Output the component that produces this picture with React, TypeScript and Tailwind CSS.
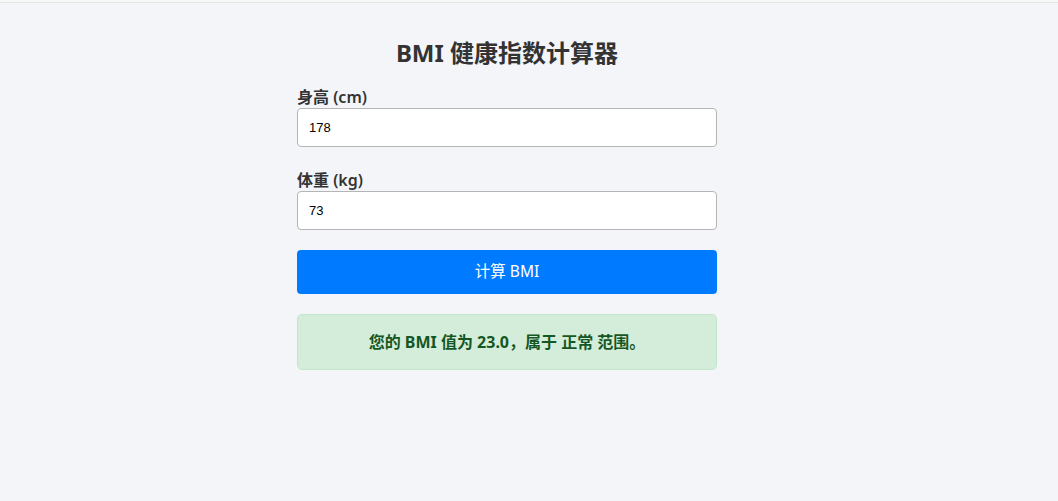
import { useState } from "react";

const font = { fontFamily: '"Noto Sans", "Noto Sans CJK SC", sans-serif' };
const inputFont = { fontFamily: '"Liberation Sans", Arial, sans-serif' };

export default function App() {
  const [height, setHeight] = useState("178");
  const [weight, setWeight] = useState("73");

  return (
    <div className="min-h-[501px] bg-[#f4f5f9] text-[#333]" style={font}>
      <div className="h-[3px] border-b border-[#e6e6e6] bg-[#f7f7f7]" />
      <div className="flex justify-center pr-[44px]">
        <div className="w-[420px] pt-[34px]">
          <h1 className="text-center text-[24px] font-bold leading-[32px] text-[#333]">
            BMI 健康指数计算器
          </h1>

          <label className="mt-[18px] block text-[16px] font-semibold leading-[20px]">
            身高 (cm)
          </label>
          <input
            type="text"
            value={height}
            onChange={(e) => setHeight(e.target.value)}
            className="mt-[1px] block h-[39px] w-full rounded-[4px] border border-[#b5b5b5] bg-white px-[11px] text-[13px] text-black outline-none"
            style={inputFont}
          />

          <label className="mt-[23px] block text-[16px] font-semibold leading-[20px]">
            体重 (kg)
          </label>
          <input
            type="text"
            value={weight}
            onChange={(e) => setWeight(e.target.value)}
            className="mt-[1px] block h-[39px] w-full rounded-[4px] border border-[#b5b5b5] bg-white px-[11px] text-[13px] text-black outline-none"
            style={inputFont}
          />

          <button className="mt-[20px] block h-[44px] w-full rounded-[4px] bg-[#007bff] text-[15.5px] text-white">
            计算 BMI
          </button>

          <div className="mt-[20px] flex h-[56px] items-center justify-center rounded-[5px] border border-[#c3e6cb] bg-[#d4edda] text-[16px] font-bold text-[#155724]">
            您的 BMI 值为 23.0，属于 正常 范围。
          </div>
        </div>
      </div>
    </div>
  );
}
